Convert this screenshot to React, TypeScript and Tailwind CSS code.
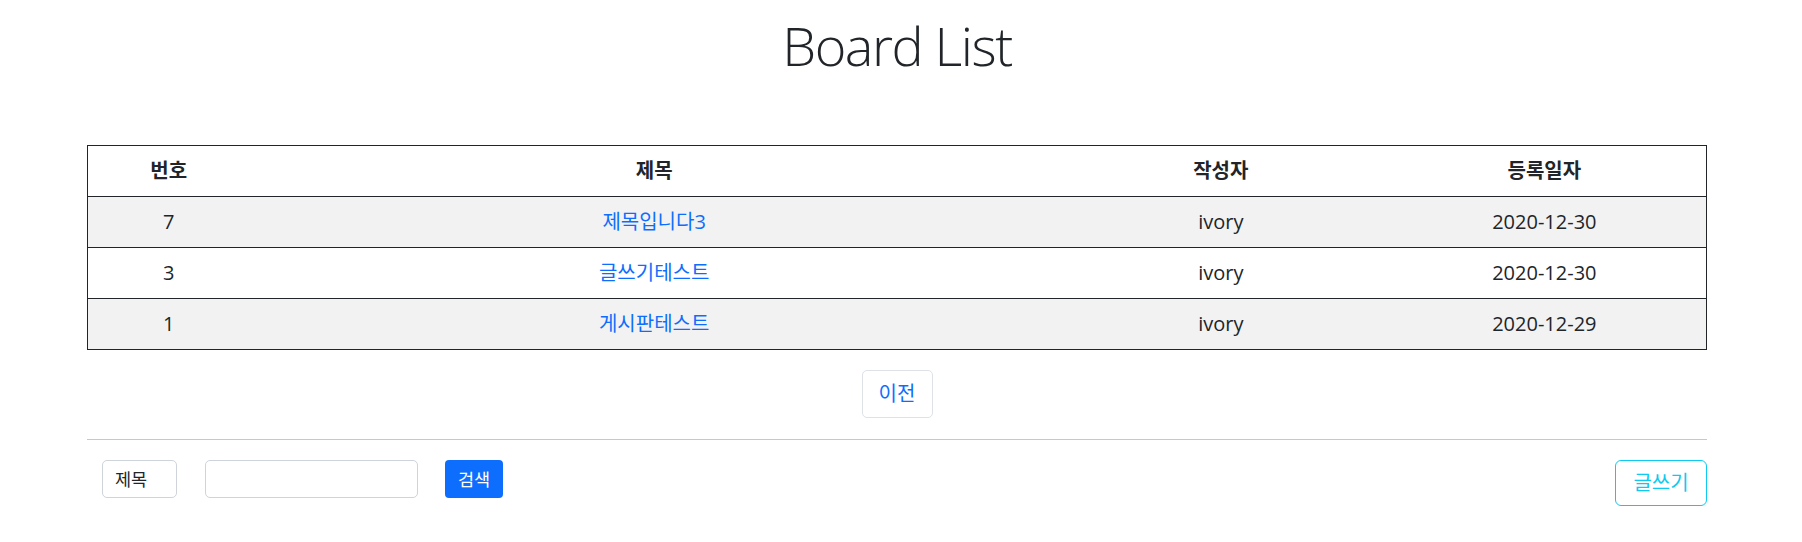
import React from "react";

const rows = [
  { no: 7, title: "제목입니다3", writer: "ivory", date: "2020-12-30", bg: "bg-[#f2f2f2]" },
  { no: 3, title: "글쓰기테스트", writer: "ivory", date: "2020-12-30", bg: "bg-white" },
  { no: 1, title: "게시판테스트", writer: "ivory", date: "2020-12-29", bg: "bg-[#f2f2f2]" },
];

export default function App() {
  return (
    <div
      className="min-h-[542px] bg-white text-[#212529]"
      style={{ fontFamily: '"Open Sans", "Noto Sans CJK KR", sans-serif' }}
    >
      <div className="ml-[87px] w-[1620px]">
        <h1 className="pt-[13px] text-center text-[54px] font-light leading-[65px] tracking-[-1.5px]">
          Board List
        </h1>

        <table className="mt-[67px] w-full table-fixed border-collapse border border-[#212529] text-[20px]">
          <colgroup>
            <col className="w-[10%]" />
            <col className="w-[50%]" />
            <col className="w-[20%]" />
            <col className="w-[20%]" />
          </colgroup>
          <thead>
            <tr className="border-b border-[#212529]">
              <th className="h-[51px] p-0 text-center font-bold">번호</th>
              <th className="h-[51px] p-0 text-center font-bold">제목</th>
              <th className="h-[51px] p-0 text-center font-bold">작성자</th>
              <th className="h-[51px] p-0 text-center font-bold">등록일자</th>
            </tr>
          </thead>
          <tbody>
            {rows.map((r) => (
              <tr key={r.no} className={`border-b border-[#212529] ${r.bg}`}>
                <td className="h-[51px] p-0 text-center">{r.no}</td>
                <td className="h-[51px] p-0 text-center">
                  <a href="#" className="text-[#0d6efd]">
                    {r.title}
                  </a>
                </td>
                <td className="h-[51px] p-0 text-center">{r.writer}</td>
                <td className="h-[51px] p-0 text-center">{r.date}</td>
              </tr>
            ))}
          </tbody>
        </table>

        <div className="mt-[20px] flex justify-center">
          <button className="flex h-[48px] w-[71px] items-center justify-center rounded-[5px] border border-[#dee2e6] bg-white text-[20px] text-[#0d6efd]">
            이전
          </button>
        </div>

        <div className="mt-[21px] h-px bg-[#c8c8c8]" />

        <div className="mt-[20px] flex items-start">
          <div className="ml-[15px] flex h-[38px] w-[75px] items-center rounded-[5px] border border-[#ced4da] pl-[12px] text-[17.5px]">
            제목
          </div>
          <input
            type="text"
            className="ml-[28px] h-[38px] w-[213px] rounded-[5px] border border-[#ced4da] px-[12px] text-[17.5px] outline-none"
          />
          <button className="ml-[27px] flex h-[38px] w-[58px] items-center justify-center rounded-[4px] bg-[#0d6efd] text-[17.5px] text-white">
            검색
          </button>
          <button className="ml-auto flex h-[46px] w-[92px] items-center justify-center rounded-[6px] border border-[#0dcaf0] bg-white text-[20px] text-[#0dcaf0]">
            글쓰기
          </button>
        </div>
      </div>
    </div>
  );
}
